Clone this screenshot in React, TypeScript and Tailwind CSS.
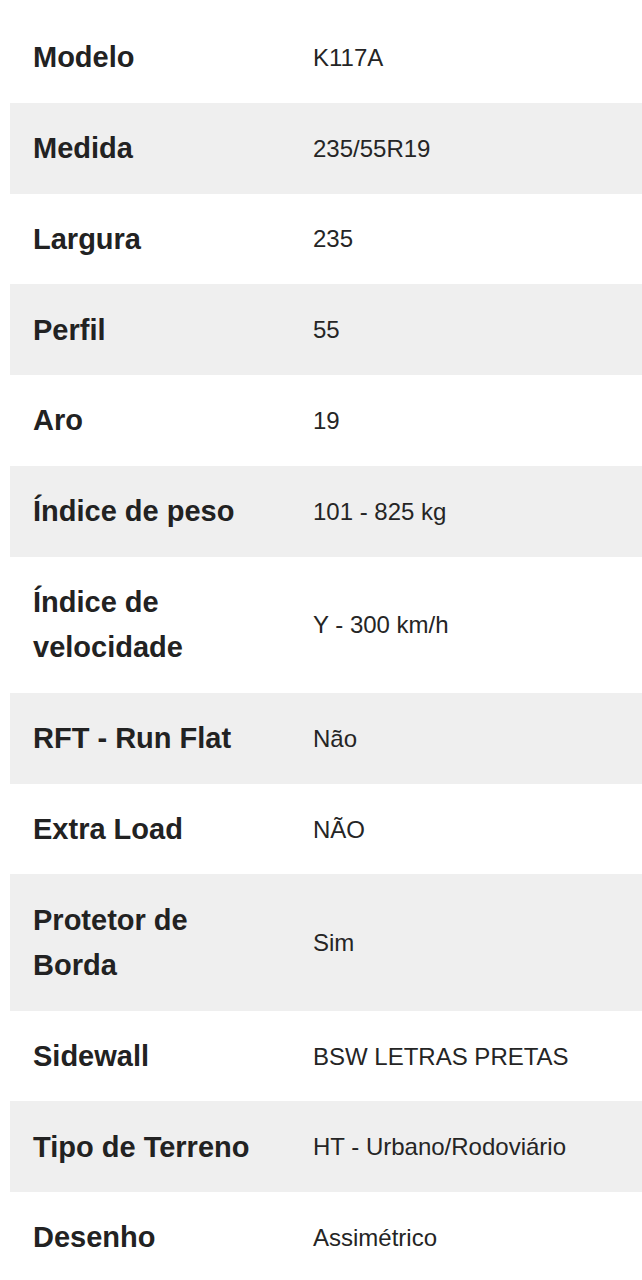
const specs: [string, string][] = [
  ["Modelo", "K117A"],
  ["Medida", "235/55R19"],
  ["Largura", "235"],
  ["Perfil", "55"],
  ["Aro", "19"],
  ["Índice de peso", "101 - 825 kg"],
  ["Índice de velocidade", "Y - 300 km/h"],
  ["RFT - Run Flat", "Não"],
  ["Extra Load", "NÃO"],
  ["Protetor de Borda", "Sim"],
  ["Sidewall", "BSW LETRAS PRETAS"],
  ["Tipo de Terreno", "HT - Urbano/Rodoviário"],
  ["Desenho", "Assimétrico"],
];

export default function App() {
  return (
    <div
      className="bg-white min-h-screen pt-[12px] pl-[10px] text-[#222]"
      style={{ fontFamily: '"Liberation Sans", Arial, sans-serif' }}
    >
      <div className="flex flex-col">
        {specs.map(([label, value], i) => (
          <div
            key={label}
            className={`flex items-center ${i % 2 === 1 ? "bg-[#efefef]" : "bg-white"}`}
          >
            <div className="w-[280px] shrink-0 px-[23px] pt-[23.2px] pb-[22.2px] text-[29px] leading-[45.4px] font-bold">
              {label}
            </div>
            <div className="pl-[23px] pt-[1px] text-[24px] leading-[30px] text-[#252525]">
              {value}
            </div>
          </div>
        ))}
      </div>
    </div>
  );
}
